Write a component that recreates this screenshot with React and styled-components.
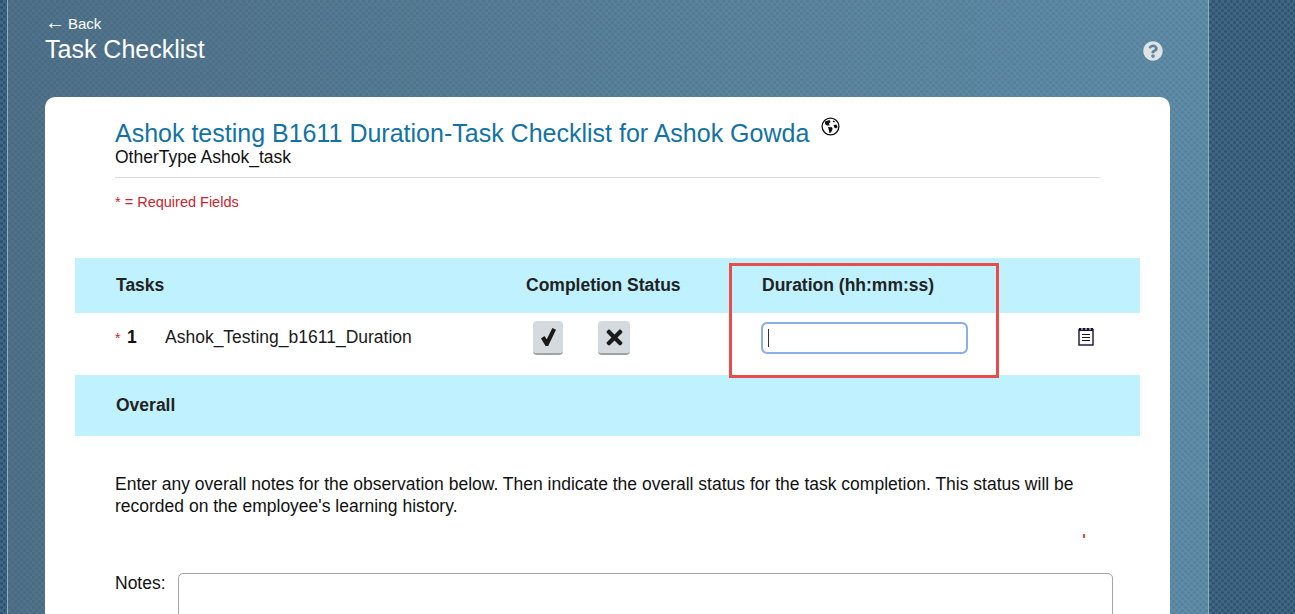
import styled, { createGlobalStyle } from "styled-components";
import { FaTimes, FaQuestionCircle } from "react-icons/fa";

const GlobalStyle = createGlobalStyle`
    html, body {
        margin: 0;
        height: 100%;
        overflow: hidden;
    }
    body {
        font-family: "Liberation Sans", Arial, sans-serif;
        color: #1a1a1a;
    }
`;

const dots = (alpha) => `
    radial-gradient(circle at 1.5px 1.5px, rgba(10, 30, 50, ${alpha}) 1px, transparent 2px),
    radial-gradient(circle at 4.5px 4.5px, rgba(10, 30, 50, ${alpha}) 1px, transparent 2px)
`;

const GlobeIcon = () => (
    <svg width="19" height="19" viewBox="0 0 19 19">
        <circle cx="9.5" cy="9.5" r="8.4" fill="#fff" stroke="#111" strokeWidth="1.3" />
        <path d="M4 4.5 L8.5 3 L9.5 5 L8 6.5 L8.6 8.4 L6 8.6 L4 7 Z" fill="#111" />
        <path d="M7 10 L11 10.2 L11.6 12 L10 15.5 L8.4 16 L7.8 13 Z" fill="#111" />
        <path d="M12 3.5 L14 4.2 L13.2 5.6 L11.8 5 Z" fill="#111" />
        <path d="M12.6 8 L15.4 7.4 L16.6 10 L15 11.6 L13.2 10.4 Z" fill="#111" />
    </svg>
);

const CheckIcon = () => (
    <svg width="15" height="18" viewBox="0 0 15 18">
        <path d="M0 10.5 L3.4 8 L5.8 11.2 L11.4 0 L15 1.8 L7.2 18 L4.6 18 Z" fill="#1a1a1a" />
    </svg>
);

const NotepadIcon = () => (
    <svg width="16" height="19" viewBox="0 0 16 19">
        <rect x="1" y="2.5" width="14" height="15.5" fill="#fff" stroke="#1a1030" strokeWidth="1.4" />
        <rect x="1" y="1" width="14" height="3" fill="#1a1030" />
        <path d="M4 1v2M8 1v2M12 1v2" stroke="#fff" strokeWidth="1" />
        <path d="M4 7.5h8M4 10.5h8M4 13.5h8" stroke="#111" strokeWidth="1.2" />
    </svg>
);

const App = () => {
    return (
        <Page>
            <GlobalStyle />
            <Main>
                <TopBar>
                    <div>
                        <BackLink href="#"><BackArrow>←</BackArrow>Back</BackLink>
                        <PageTitle>Task Checklist</PageTitle>
                    </div>
                    <HelpButton><FaQuestionCircle size={20} /></HelpButton>
                </TopBar>
                <Card>
                    <CardHeader>
                        <TitleRow>
                            <Title>Ashok testing B1611 Duration-Task Checklist for Ashok Gowda</Title>
                            <GlobeSlot><GlobeIcon /></GlobeSlot>
                        </TitleRow>
                        <SubTitle>OtherType Ashok_task</SubTitle>
                    </CardHeader>
                    <Required>* = Required Fields</Required>
                    <Table>
                        <HeaderRow>
                            <HeadCell>Tasks</HeadCell>
                            <HeadCell>Completion Status</HeadCell>
                            <HeadCell>Duration (hh:mm:ss)</HeadCell>
                        </HeaderRow>
                        <TaskRow>
                            <TaskName>
                                <Star>*</Star>
                                <TaskNumber>1</TaskNumber>
                                Ashok_Testing_b1611_Duration
                            </TaskName>
                            <StatusButtons>
                                <StatusButton $width={30}><CheckIcon /></StatusButton>
                                <StatusButton $width={32}><FaTimes size={23} /></StatusButton>
                            </StatusButtons>
                            <InputWrap>
                                <DurationInput type="text" />
                                <Caret />
                            </InputWrap>
                            <NoteSlot><NotepadIcon /></NoteSlot>
                        </TaskRow>
                        <OverallRow>
                            <HeadCell>Overall</HeadCell>
                        </OverallRow>
                        <Highlight />
                    </Table>
                    <Intro>
                        Enter any overall notes for the observation below. Then indicate the overall status for the task completion. This status will be recorded on the employee's learning history.
                    </Intro>
                    <TickRow><Tick /></TickRow>
                    <NotesRow>
                        <NotesLabel>Notes:</NotesLabel>
                        <NotesBox />
                    </NotesRow>
                </Card>
            </Main>
        </Page>
    );
}

const Page = styled.div`
    display: grid;
    grid-template-columns: 7px 1202px 86px;
    height: 614px;
    overflow: hidden;
    background-color: #3f6685;
    background-image: ${dots(0.28)};
    background-size: 6px 6px;
`;

const Main = styled.main`
    grid-column: 2;
    padding: 0 38px 0 37px;
    border-left: 1px solid #8fb0c4;
    border-right: 1px solid #8fb0c4;
    background-image: ${dots(0.09)}, linear-gradient(90deg, #4f7189 0%, #5b849d 60%, #5f8ca8 100%);
    background-size: 6px 6px, 6px 6px, 100% 100%;
`;

const TopBar = styled.div`
    display: flex;
    justify-content: space-between;
    height: 97px;
    padding-top: 14px;
    box-sizing: border-box;
`;

const BackLink = styled.a`
    display: block;
    height: 17px;
    color: #fff;
    font-size: 15px;
    line-height: 17px;
    text-decoration: none;
`;

const BackArrow = styled.span`
    display: inline-block;
    width: 23px;
    font-size: 20px;
    line-height: 17px;
`;

const PageTitle = styled.h1`
    margin: 3px 0 0;
    color: #fff;
    font-size: 25px;
    font-weight: 400;
    line-height: 30px;
`;

const HelpButton = styled.div`
    margin: 27px 7px 0 0;
    color: #dfe3e5;
    line-height: 0;
`;

const Card = styled.section`
    height: 600px;
    padding: 22px 30px 0;
    background: #fff;
    border-radius: 10px 10px 0 0;
`;

const CardHeader = styled.header`
    margin: 0 40px 0 40px;
    height: 58px;
    border-bottom: 1px solid #dcdcdc;
`;

const TitleRow = styled.div`
    display: flex;
    align-items: flex-start;
    gap: 12px;
`;

const Title = styled.h2`
    margin: 0;
    color: #1273a3;
    font-size: 25px;
    font-weight: 400;
    line-height: 28px;
`;

const GlobeSlot = styled.span`
    margin-top: -2px;
    line-height: 0;
`;

const SubTitle = styled.div`
    font-size: 17.5px;
    line-height: 20px;
    color: #111;
`;

const Required = styled.p`
    margin: 15px 0 0 40px;
    color: #c9252d;
    font-size: 14.5px;
    line-height: 18px;
`;

const Table = styled.div`
    position: relative;
    margin-top: 47px;
`;

const columns = `
    display: grid;
    grid-template-columns: 451px 236px 316px 62px;
`;

const HeaderRow = styled.div`
    ${columns}
    align-items: center;
    height: 55px;
    background: #bff1fe;
`;

const HeadCell = styled.div`
    font-size: 17.5px;
    font-weight: 700;
    color: #222;
    &:first-child {
        padding-left: 41px;
    }
`;

const TaskRow = styled.div`
    ${columns}
    box-sizing: border-box;
    height: 62px;
    padding-top: 8px;
`;

const TaskName = styled.div`
    display: flex;
    align-items: baseline;
    padding: 6px 0 0 40px;
    font-size: 17.5px;
    color: #1a1a1a;
`;

const Star = styled.span`
    width: 12px;
    color: #c9252d;
    font-size: 14px;
`;

const TaskNumber = styled.span`
    width: 38px;
    font-weight: 700;
    color: #111;
`;

const StatusButtons = styled.div`
    display: flex;
    align-items: flex-start;
    gap: 35px;
    padding-left: 7px;
`;

const StatusButton = styled.button`
    display: flex;
    align-items: center;
    justify-content: center;
    width: ${props => props.$width}px;
    height: 34px;
    padding: 0;
    border: 0;
    border-bottom: 2px solid #9ea3a8;
    border-radius: 4px;
    background: #d5dade;
    color: #1a1a1a;
`;

const InputWrap = styled.div`
    position: relative;
    width: 205px;
    height: 30px;
    margin-top: 2px;
`;

const DurationInput = styled.input`
    display: block;
    box-sizing: border-box;
    width: 100%;
    height: 100%;
    padding: 0 6px;
    border: 1px solid #a8a8a8;
    border-radius: 5px;
    outline: 2px solid #89aee8;
    outline-offset: -1px;
    background: #fff;
`;

const Caret = styled.span`
    position: absolute;
    left: 6px;
    top: 6px;
    width: 1px;
    height: 18px;
    background: #333;
`;

const NoteSlot = styled.div`
    padding-top: 6px;
    line-height: 0;
`;

const OverallRow = styled.div`
    display: flex;
    align-items: center;
    height: 61px;
    background: #bff1fe;
`;

const Highlight = styled.div`
    position: absolute;
    left: 654px;
    top: 5px;
    width: 270px;
    height: 115px;
    box-sizing: border-box;
    border: 3px solid #e94c4a;
    pointer-events: none;
`;

const Intro = styled.p`
    margin: 37px 40px 0;
    font-size: 17.5px;
    line-height: 22px;
    color: #111;
`;

const TickRow = styled.div`
    display: flex;
    justify-content: flex-end;
    margin-top: 17px;
    padding-right: 55px;
`;

const Tick = styled.span`
    width: 2px;
    height: 4px;
    background: #e94c4a;
`;

const NotesRow = styled.div`
    display: flex;
    align-items: flex-start;
    gap: 12px;
    margin: 35px 27px 0 40px;
`;

const NotesLabel = styled.label`
    padding-top: 1px;
    font-size: 17.5px;
    line-height: 18px;
    color: #111;
`;

const NotesBox = styled.div`
    flex: 1;
    height: 120px;
    border: 1px solid #a5a5a5;
    border-radius: 5px;
`;

export default App;
